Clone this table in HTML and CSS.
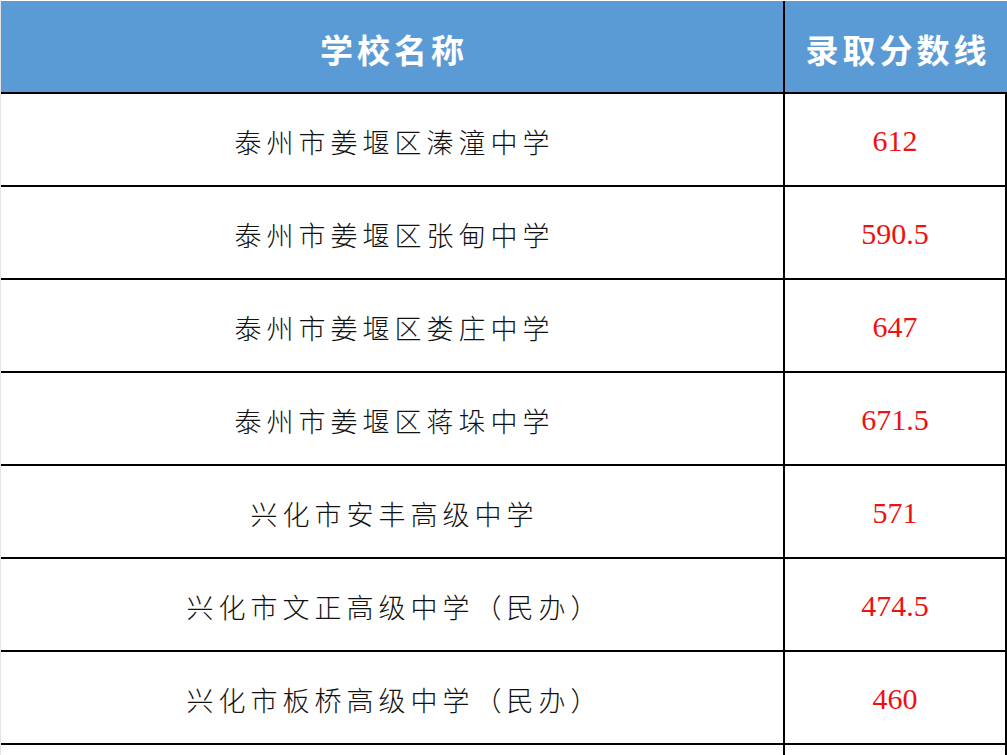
FILE: index.html
```html
<!DOCTYPE html>
<html lang="zh">
<head>
<meta charset="utf-8">
<title>录取分数线</title>
<link rel="stylesheet" href="styles.css">
</head>
<body>
<div class="sheet">
  <div class="row head">
    <div class="cell name">学校名称</div>
    <div class="cell score">录取分数线</div>
  </div>
  <div class="row">
    <div class="cell name">泰州市姜堰区溱潼中学</div>
    <div class="cell score">612</div>
  </div>
  <div class="row">
    <div class="cell name">泰州市姜堰区张甸中学</div>
    <div class="cell score">590.5</div>
  </div>
  <div class="row">
    <div class="cell name">泰州市姜堰区娄庄中学</div>
    <div class="cell score">647</div>
  </div>
  <div class="row">
    <div class="cell name">泰州市姜堰区蒋垛中学</div>
    <div class="cell score">671.5</div>
  </div>
  <div class="row">
    <div class="cell name">兴化市安丰高级中学</div>
    <div class="cell score">571</div>
  </div>
  <div class="row">
    <div class="cell name">兴化市文正高级中学（民办）</div>
    <div class="cell score">474.5</div>
  </div>
  <div class="row">
    <div class="cell name">兴化市板桥高级中学（民办）</div>
    <div class="cell score">460</div>
  </div>
  <div class="row">
    <div class="cell name"></div>
    <div class="cell score"></div>
  </div>
</div>
</body>
</html>
```

FILE: styles.css
```css
html, body {
  margin: 0;
  padding: 0;
  background: #ffffff;
  overflow: hidden;
}
body {
  border-left: 1px solid #e4e4e4;
}
.sheet {
  width: 1006px;
  padding-top: 1px;
}
.row {
  display: flex;
  height: 93px;
  box-sizing: border-box;
  border-bottom: 2px solid #000;
}
.cell {
  display: flex;
  align-items: center;
  justify-content: center;
  box-sizing: border-box;
  padding-top: 3px;
}
.name {
  width: 784px;
  border-right: 2px solid #000;
  font-family: "Noto Sans CJK SC", sans-serif;
  font-weight: 300;
  font-size: 27px;
  letter-spacing: 5px;
  padding-left: 5px;
  color: #111;
}
.score {
  width: 222px;
  border-right: 2px solid #000;
  font-family: "Liberation Serif", "Times New Roman", serif;
  font-size: 30px;
  color: #ee1111;
}
.head {
  background: #5b9bd5;
  height: 93px;
}
.head .cell {
  font-family: "Noto Sans CJK SC", sans-serif;
  font-weight: 700;
  font-size: 33px;
  letter-spacing: 4px;
  color: #ffffff;
  padding-top: 4px;
}
.head .name {
  padding-left: 4px;
}
.head .score {
  border-right: none;
  padding-left: 4px;
}
```
